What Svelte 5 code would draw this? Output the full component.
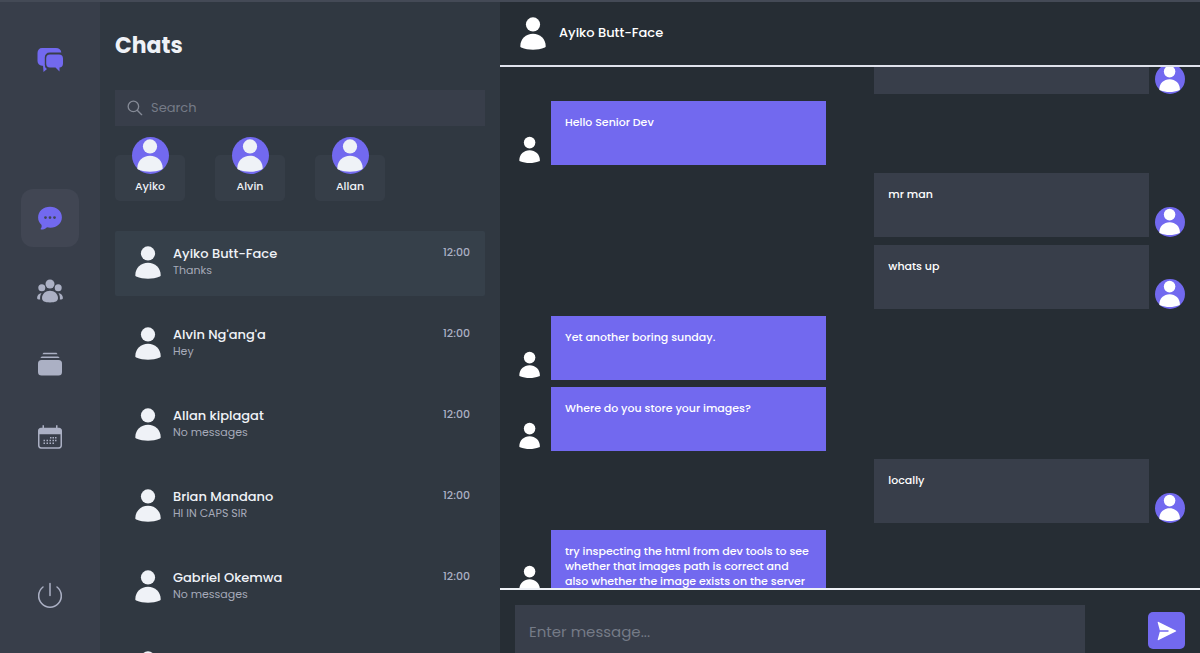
<script lang="ts">
	import { onMount } from 'svelte';

	interface Chat {
		name: string;
		last: string;
		time: string;
	}

	interface Message {
		text: string;
		sent: boolean;
	}

	const recent = ['Ayiko', 'Alvin', 'Allan'];

	const chats: Chat[] = [
		{ name: 'Ayiko Butt-Face', last: 'Thanks', time: '12:00' },
		{ name: "Alvin Ng'ang'a", last: 'Hey', time: '12:00' },
		{ name: 'Allan kiplagat', last: 'No messages', time: '12:00' },
		{ name: 'Brian Mandano', last: 'HI IN CAPS SIR', time: '12:00' },
		{ name: 'Gabriel Okemwa', last: 'No messages', time: '12:00' },
		{ name: 'Gloony Nick', last: 'No messages', time: '12:00' }
	];

	const messages: Message[] = [
		{ text: 'Hey', sent: true },
		{ text: 'Hello Senior Dev', sent: false },
		{ text: 'mr man', sent: true },
		{ text: 'whats up', sent: true },
		{ text: 'Yet another boring sunday.', sent: false },
		{ text: 'Where do you store your images?', sent: false },
		{ text: 'locally', sent: true },
		{
			text: 'try inspecting the html from dev tools to see whether that images path is correct and also whether the image exists on the server',
			sent: false
		}
	];

	let selected = $state(0);
	let draft = $state('');
	let search = $state('');
	let feed: HTMLElement;

	const current = $derived(chats[selected]);

	// skip past the start of the first message
	onMount(() => {
		feed.scrollTop = 37;
	});

	function send(e: Event) {
		e.preventDefault();
		draft = '';
	}
</script>

{#snippet person()}
	<svg class="person" viewBox="0 0 37 37" aria-hidden="true">
		<circle cx="18" cy="9.4" r="7.1" />
		<path d="M5.300 31.200C5.300 24 10.900 18.800 18 18.800S30.700 24 30.700 31.200C30.700 32 30.400 32.200 29.800 32.500C22.500 35.400 13.500 35.400 6.200 32.500C5.600 32.200 5.300 32 5.300 31.200Z" />
	</svg>
{/snippet}

<div class="app">
	<aside class="rail">
		<svg class="logo" viewBox="0 0 26 26" aria-hidden="true">
			<path d="M5 1H19C22 1 24 2.500 24.300 5.500H13C9.500 5.500 7.800 7.500 7.800 10.500V19L5 18.800C2.300 18.500 .5 16.500 .5 14V6C.5 3 2.300 1 5 1Z" />
			<path d="M6 18H7.800C7.900 20 8.600 21.300 10 22L6.500 25Z" />
			<path d="M13 7.500H22C24.500 7.500 26 9 26 11.500V16.500C26 19 24.500 20.500 22.500 20.500V24.500L18.500 20.500H13C10.500 20.500 9.200 19 9.200 16.500V11.500C9.200 9 10.500 7.500 13 7.500Z" />
		</svg>

		<nav>
			<button class="tab active" aria-label="Chats">
				<svg viewBox="0 0 24 24">
					<path fill-rule="evenodd" d="M12 .8C18.800 .8 23.900 5.300 23.900 11.300S18.800 21.800 12.400 21.800C11.300 21.800 10 21.600 9 21.300C7.500 22.800 5.500 23.700 3 23.600C2.500 23.500 2.500 23 2.800 22.600C3.700 21.300 3.900 20 3.400 18.700C1.300 17 .1 14.500 .1 11.500C.1 5.300 5.200 .8 12 .8ZM7.500 10.200a1.400 1.400 0 1 0 0 2.800a1.400 1.400 0 0 0 0-2.800ZM12 10.200a1.400 1.400 0 1 0 0 2.800a1.400 1.400 0 0 0 0-2.800ZM16.500 10.200a1.400 1.400 0 1 0 0 2.800a1.400 1.400 0 0 0 0-2.800Z" />
				</svg>
			</button>
			<button class="tab" aria-label="Groups">
				<svg viewBox="0 0 26 24">
					<circle cx="13" cy="5" r="4.500" />
					<circle cx="4.800" cy="8.700" r="3.500" />
					<circle cx="21.200" cy="8.700" r="3.500" />
					<path d="M5 19C5 15 8.500 11.800 13 11.800S21 15 21 19C21 22.200 18.500 23.400 13 23.400S5 22.200 5 19Z" />
					<path d="M4.600 14C1.500 14.500 .2 16.500 .1 19C.1 20 1 20.500 3.200 20.600C2.900 18.300 3.200 16 4.600 14Z" />
					<path d="M21.400 14C24.500 14.500 25.800 16.500 25.900 19C25.900 20 25 20.500 22.800 20.600C23.100 18.300 22.800 16 21.400 14Z" />
				</svg>
			</button>
			<button class="tab" aria-label="Collections">
				<svg viewBox="0 0 24 24">
					<path d="M6 .8H18C18.700 .8 19.200 1.500 19.500 2.300H4.500C4.800 1.500 5.300 .8 6 .8Z" />
					<path d="M4.500 4.400H19.500C20.500 4.400 21.200 5 21.600 6.100H2.400C2.800 5 3.500 4.400 4.500 4.400Z" />
					<rect x="0" y="8" width="24" height="15.500" rx="3.500" />
				</svg>
			</button>
			<button class="tab" aria-label="Calendar">
				<svg viewBox="0 0 24 24">
					<path fill-rule="evenodd" d="M4.500 .2H6V2.700H18V.2H19.500V2.700H21C22.800 2.700 24 4 24 5.800V20.500C24 22.500 22.800 23.700 21 23.700H3C1.200 23.700 0 22.500 0 20.500V5.800C0 4 1.200 2.700 3 2.700H4.500ZM1.500 9.200V20.200C1.500 21.500 2.200 22.200 3.500 22.200H20.500C21.800 22.200 22.500 21.500 22.500 20.200V9.200Z" />
					<path d="M12 12h1.500v1.500H12zM14.500 12H16v1.500h-1.500zM17 12h1.500v1.500H17zM5.500 14.700H7v1.500H5.500zM8.500 14.700H10v1.500H8.500zM11.500 14.700H13v1.500h-1.500zM14.500 14.700H16v1.500h-1.500zM17 14.700h1.500v1.500H17zM5.500 17.500H7V19H5.500zM8.500 17.500H10V19H8.500zM11.500 17.500H13V19h-1.500zM14.500 17.500H16V19h-1.500z" />
				</svg>
			</button>
		</nav>

		<button class="power" aria-label="Log out">
			<svg viewBox="0 0 26 26">
				<path d="M13 1.500V13.500M6 5A11.300 11.300 0 1 0 20 5" />
			</svg>
		</button>
	</aside>

	<section class="chats">
		<h1>Chats</h1>

		<label class="search">
			<svg viewBox="0 0 18 18" aria-hidden="true">
				<circle cx="7.200" cy="7.200" r="5.900" />
				<path d="M11.500 11.500L16.500 16.500" />
			</svg>
			<input type="search" placeholder="Search" aria-label="Search" bind:value={search} />
		</label>

		<div class="recent">
			{#each recent as name}
				<button class="story">
					<span class="avatar filled">{@render person()}</span>
					<span class="story-name">{name}</span>
				</button>
			{/each}
		</div>

		<div class="list">
			{#each chats as chat, i}
				<button class="chat" class:selected={i === selected} onclick={() => (selected = i)}>
					<span class="avatar">{@render person()}</span>
					<span class="info">
						<span class="name">{chat.name}</span>
						<span class="last">{chat.last}</span>
					</span>
					<span class="time">{chat.time}</span>
				</button>
			{/each}
		</div>
	</section>

	<main>
		<header>
			<span class="avatar">{@render person()}</span>
			<h2>{current.name}</h2>
		</header>

		<div class="feed" bind:this={feed}>
			{#each messages as message}
				<div class="message" class:sent={message.sent}>
					<span class="avatar small" class:filled={message.sent}>{@render person()}</span>
					<p>{message.text}</p>
				</div>
			{/each}
		</div>

		<form class="composer" onsubmit={send}>
			<input type="text" placeholder="Enter message..." aria-label="Message" bind:value={draft} />
			<button class="send" aria-label="Send">
				<svg viewBox="0 0 20 20">
					<path fill-rule="evenodd" d="M1.200 .8C.8 .6 .6 .9 .7 1.400L2.800 9.300H11.500V10.700H2.800L.7 18.600C.6 19.100 .8 19.400 1.200 19.200L18.800 10.600C19.300 10.300 19.300 9.700 18.800 9.400Z" />
				</svg>
			</button>
		</form>
	</main>
</div>

<style>
	:global(body) {
		margin: 0;
		background: #262e35;
	}

	.app {
		display: grid;
		grid-template-columns: 100px 400px 1fr;
		height: 100vh;
		box-sizing: border-box;
		overflow: hidden;
		border-top: 2px solid #444a56;
		color: #eff2f7;
		font-family: Poppins, Inter, sans-serif;
		font-size: 12px;
	}

	button,
	input {
		box-sizing: border-box;
		margin: 0;
		padding: 0;
		border: 0;
		background: none;
		color: inherit;
		font: inherit;
	}

	button {
		cursor: pointer;
	}

	input {
		min-width: 0;
		outline: none;
	}

	input::placeholder {
		color: #757b87;
		opacity: 1;
	}

	svg {
		display: block;
		fill: currentColor;
	}

	.rail {
		display: flex;
		flex-direction: column;
		align-items: center;
		justify-content: space-between;
		padding: 45px 0;
		background: #383e4a;
		color: #abb0c4;
	}

	.logo {
		width: 26px;
		height: 26px;
		color: #7269ef;
	}

	nav {
		display: flex;
		flex-direction: column;
		gap: 15px;
	}

	.tab {
		display: grid;
		place-items: center;
		width: 58px;
		height: 58px;
		border-radius: 12px;
	}

	.tab svg {
		height: 24px;
	}

	.tab.active {
		background: #414653;
		color: #7269ef;
	}

	.power svg {
		width: 26px;
		height: 26px;
		fill: none;
		stroke: currentColor;
		stroke-width: 1.5;
		stroke-linecap: round;
	}

	.chats {
		display: flex;
		flex-direction: column;
		min-height: 0;
		overflow: hidden;
		padding: 29px 15px 0;
		background: #303841;
	}

	h1 {
		margin: 0 0 29px;
		font-size: 22px;
		line-height: 30px;
		font-weight: 700;
	}

	.search {
		display: flex;
		flex: none;
		align-items: center;
		gap: 8px;
		height: 36px;
		padding: 0 12px;
		background: #383e4a;
		color: #858a96;
	}

	.search svg {
		width: 16px;
		height: 16px;
		fill: none;
		stroke: currentColor;
		stroke-width: 1.5;
		stroke-linecap: round;
	}

	.search input {
		flex: 1;
		height: 36px;
		font-size: 13px;
	}

	.avatar {
		flex: none;
		width: 37px;
		height: 37px;
		border-radius: 50%;
	}

	.avatar.small {
		width: 30px;
		height: 30px;
	}

	.avatar.filled {
		background: #7269ef;
	}

	.recent {
		display: flex;
		flex: none;
		gap: 30px;
		margin: 29px 0 30px;
	}

	.story {
		display: flex;
		flex-direction: column;
		align-items: center;
		width: 70px;
		height: 46px;
		border-radius: 5px;
		background: #363e48;
	}

	.story .avatar {
		margin-top: -18px;
	}

	.story-name {
		padding-top: 4px;
		font-size: 11px;
		line-height: 16px;
		font-weight: 500;
	}

	.list {
		display: flex;
		flex-direction: column;
		gap: 16px;
	}

	.chat {
		display: flex;
		flex: none;
		align-items: flex-start;
		height: 65px;
		padding: 13px 15px;
		border-radius: 2px;
		text-align: left;
	}

	.chat.selected {
		background: #36404a;
	}

	.info {
		display: flex;
		flex: 1;
		flex-direction: column;
		padding-left: 6px;
	}

	.name {
		font-size: 13px;
		line-height: 19px;
		font-weight: 500;
	}

	.last {
		color: #a6aab9;
		font-size: 11px;
		line-height: 14px;
	}

	.time {
		color: #abb0c4;
		font-size: 11px;
		line-height: 16px;
		font-weight: 500;
	}

	main {
		display: flex;
		flex-direction: column;
		min-width: 0;
		min-height: 0;
		background: #262d34;
		color: #fff;
	}

	header {
		display: flex;
		flex: none;
		align-items: center;
		gap: 7px;
		height: 62px;
		padding: 0 15px 1px;
		border-bottom: 2px solid #dfe2ec;
	}

	h2 {
		margin: 0;
		font-size: 13px;
		font-weight: 500;
	}

	.feed {
		flex: 1;
		min-height: 0;
		overflow: auto;
		scrollbar-width: none;
	}

	.message {
		display: flex;
		align-items: flex-end;
		gap: 6px;
		height: 64px;
		margin: 7px 15px 0;
	}

	.message.sent {
		flex-direction: row-reverse;
		margin-top: 8px;
	}

	.message:first-child {
		margin-top: 0;
	}

	.message p {
		box-sizing: border-box;
		width: 41%;
		height: 64px;
		margin: 0;
		padding: 14px;
		background: #7269ef;
		font-size: 11px;
		line-height: 15px;
		font-weight: 500;
	}

	.message.sent p {
		background: #383e4a;
	}

	.composer {
		display: flex;
		flex: none;
		align-items: flex-start;
		justify-content: space-between;
		height: 63px;
		box-sizing: content-box;
		overflow: hidden;
		padding: 0 15px;
		border-top: 2px solid #eff2f7;
	}

	.composer input {
		width: 85%;
		height: 52px;
		margin-top: 15px;
		padding: 0 14px;
		background: #383e4a;
		font-size: 15px;
	}

	.send {
		display: grid;
		place-items: center;
		width: 37px;
		height: 37px;
		margin-top: 22px;
		border-radius: 5px;
		background: #7269ef;
	}

	.send svg {
		width: 20px;
		height: 20px;
	}
</style>
